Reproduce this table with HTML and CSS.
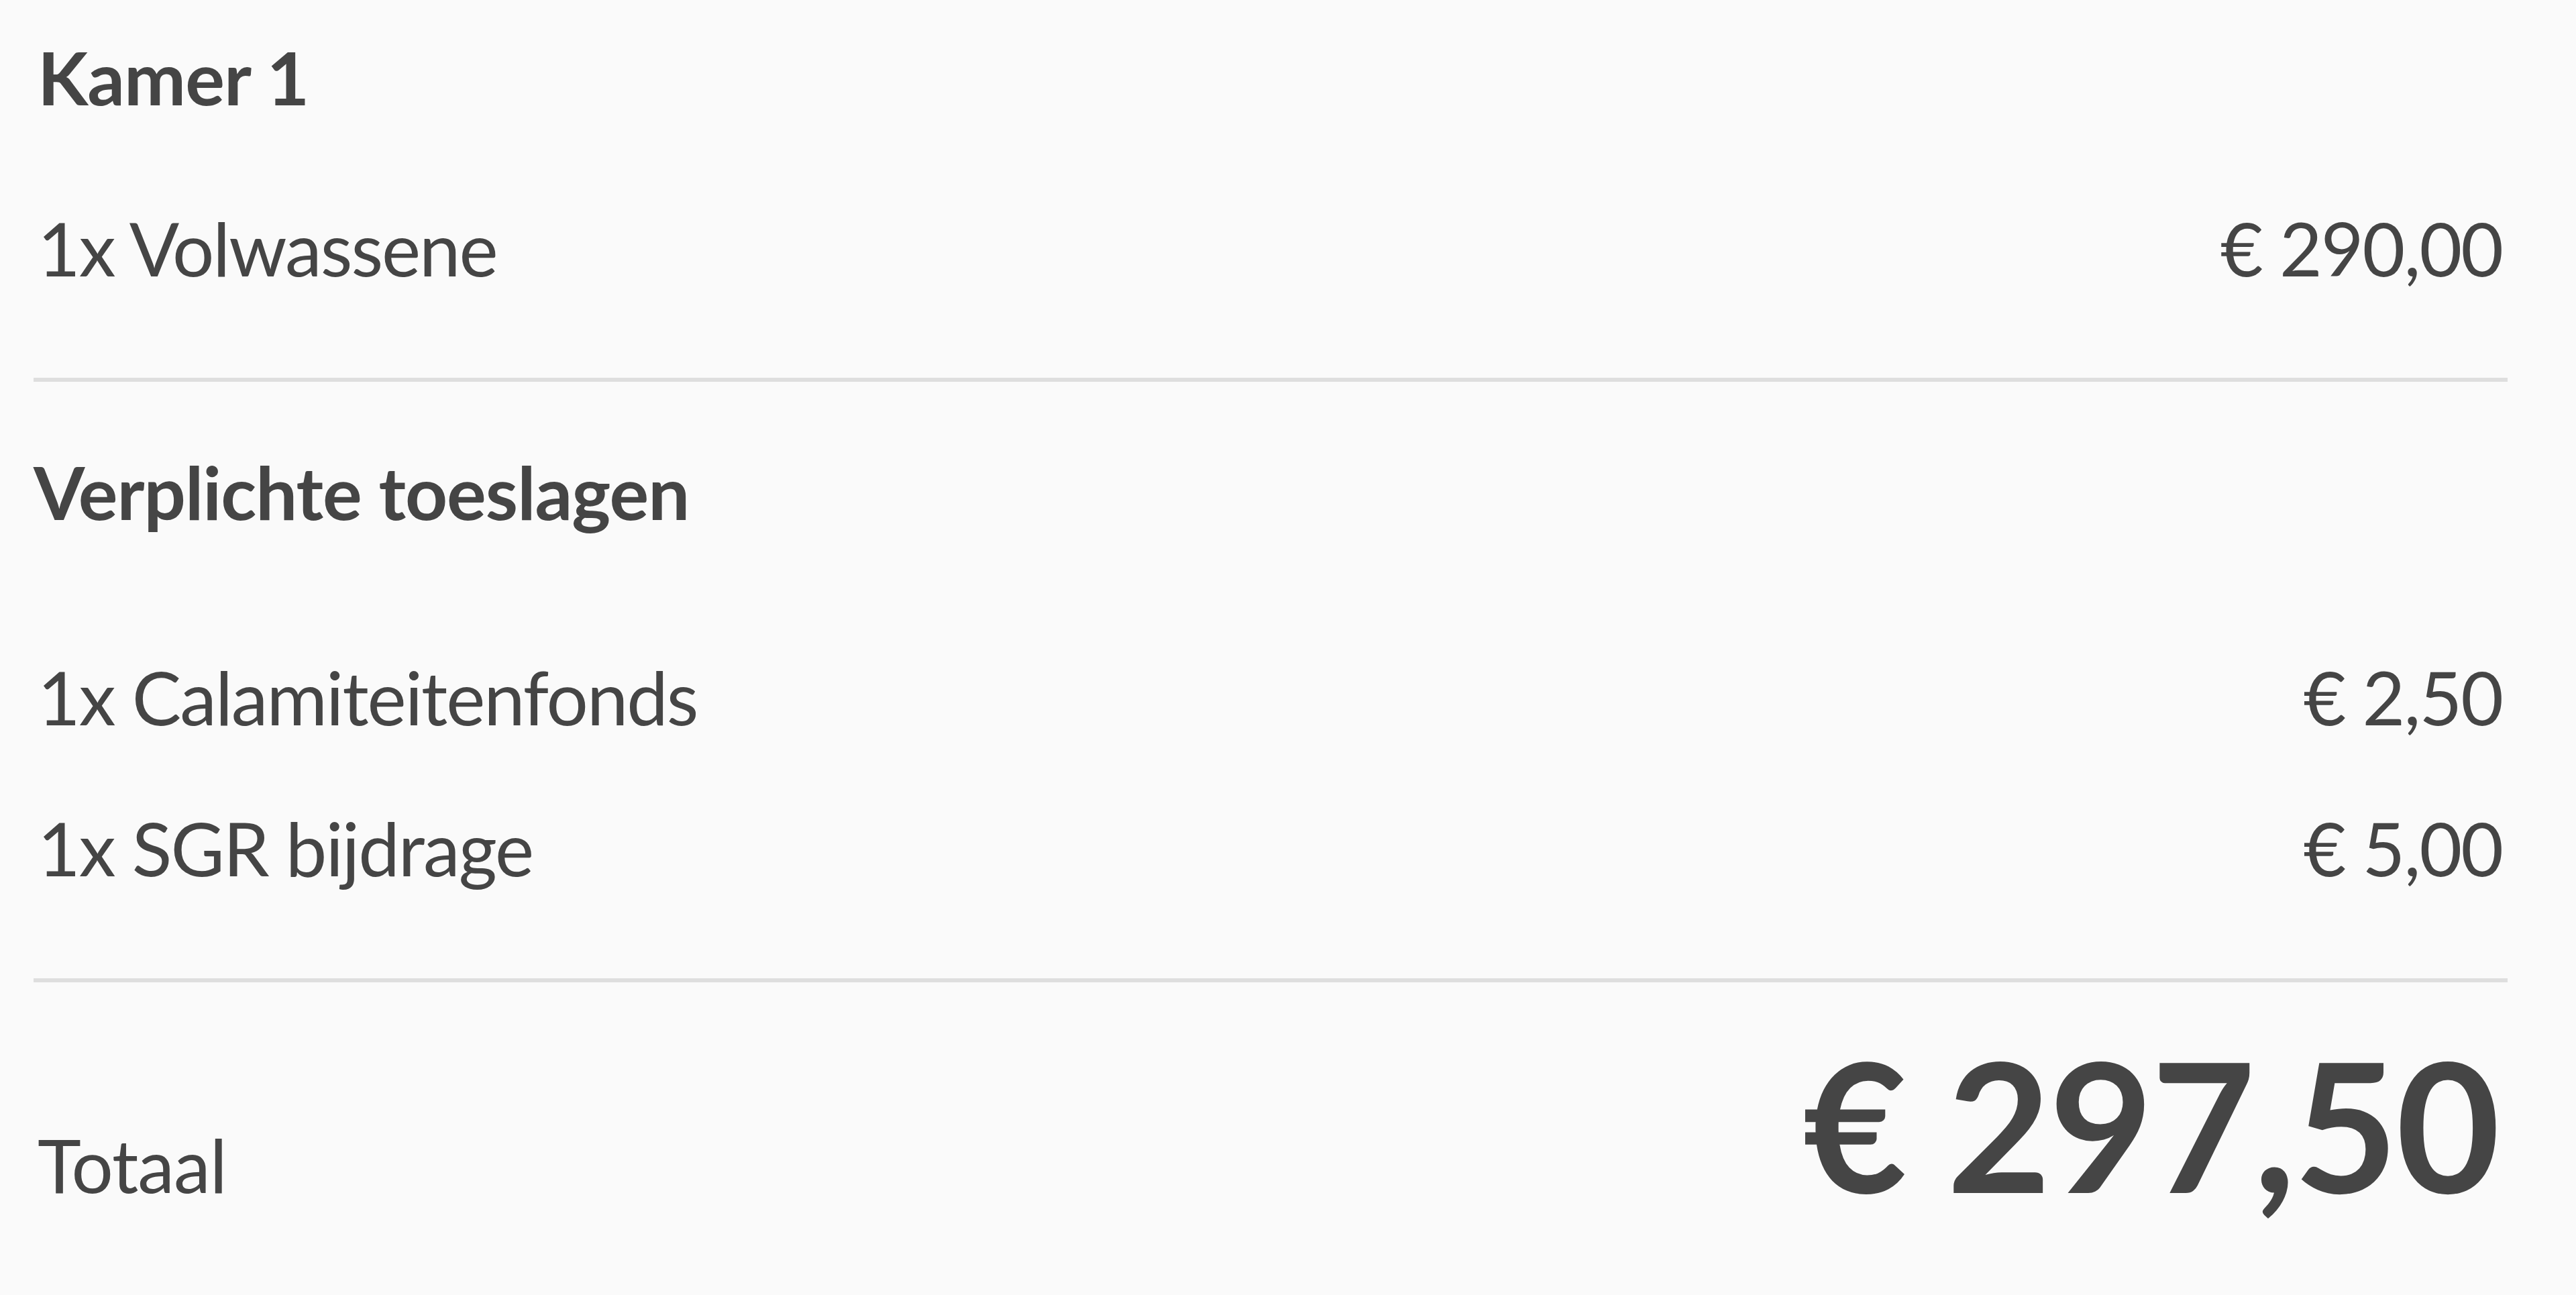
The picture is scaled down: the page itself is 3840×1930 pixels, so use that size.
FILE: index.html
```html
<!DOCTYPE html>
<html lang="nl">
<head>
<meta charset="utf-8">
<title>Prijsoverzicht</title>
<link rel="stylesheet" href="styles.css">
</head>
<body>
<div class="summary">
  <section class="group">
    <h2 class="room-title">Kamer 1</h2>
    <div class="row row-first">
      <span class="label">1x Volwassene</span>
      <span class="price">€ 290,00</span>
    </div>
  </section>
  <hr class="divider divider-one">
  <section class="group">
    <h2 class="section-title">Verplichte toeslagen</h2>
    <div class="row row-cal">
      <span class="label">1x Calamiteitenfonds</span>
      <span class="price">€ 2,50</span>
    </div>
    <div class="row row-sgr">
      <span class="label">1x SGR bijdrage</span>
      <span class="price">€ 5,00</span>
    </div>
  </section>
  <hr class="divider divider-two">
  <div class="total">
    <span class="total-label">Totaal</span>
    <span class="total-amount">€ 297,50</span>
  </div>
</div>
</body>
</html>
```
FILE: styles.css
```css
html, body {
  margin: 0;
  padding: 0;
  background: #fafafa;
}
body {
  width: 3840px;
  height: 1930px;
  overflow: hidden;
  font-family: Lato, "Noto Sans", sans-serif;
  color: #454545;
}
.summary {
  width: 3688px;
  padding: 48px 0 0 50px;
  box-sizing: content-box;
}
.group {
  margin: 0;
}
h2 {
  margin: 0;
  font-size: 110px;
  line-height: 132px;
  font-weight: 700;
  letter-spacing: -1px;
}
.room-title {
  padding-left: 6px;
}
.row {
  display: flex;
  justify-content: space-between;
  align-items: baseline;
  padding: 0 8px 0 6px;
  font-size: 110px;
  line-height: 132px;
  font-weight: 400;
  letter-spacing: -2px;
}
.row-first {
  margin-top: 123px;
}
.row-cal {
  margin-top: 174px;
}
.row-sgr {
  margin-top: 93px;
}
.divider {
  border: 0;
  height: 6px;
  background: #dedede;
  margin: 0;
}
.divider-one {
  margin-top: 128px;
  margin-bottom: 97px;
}
.divider-two {
  margin-top: 129px;
}
.total {
  display: flex;
  justify-content: space-between;
  align-items: baseline;
  padding: 0 14px 0 6px;
  margin-top: 50px;
}
.total-label {
  font-size: 110px;
  line-height: 132px;
  letter-spacing: -1px;
}
.total-amount {
  font-size: 268px;
  line-height: 1.2;
  font-weight: 700;
  letter-spacing: -3px;
}
```
